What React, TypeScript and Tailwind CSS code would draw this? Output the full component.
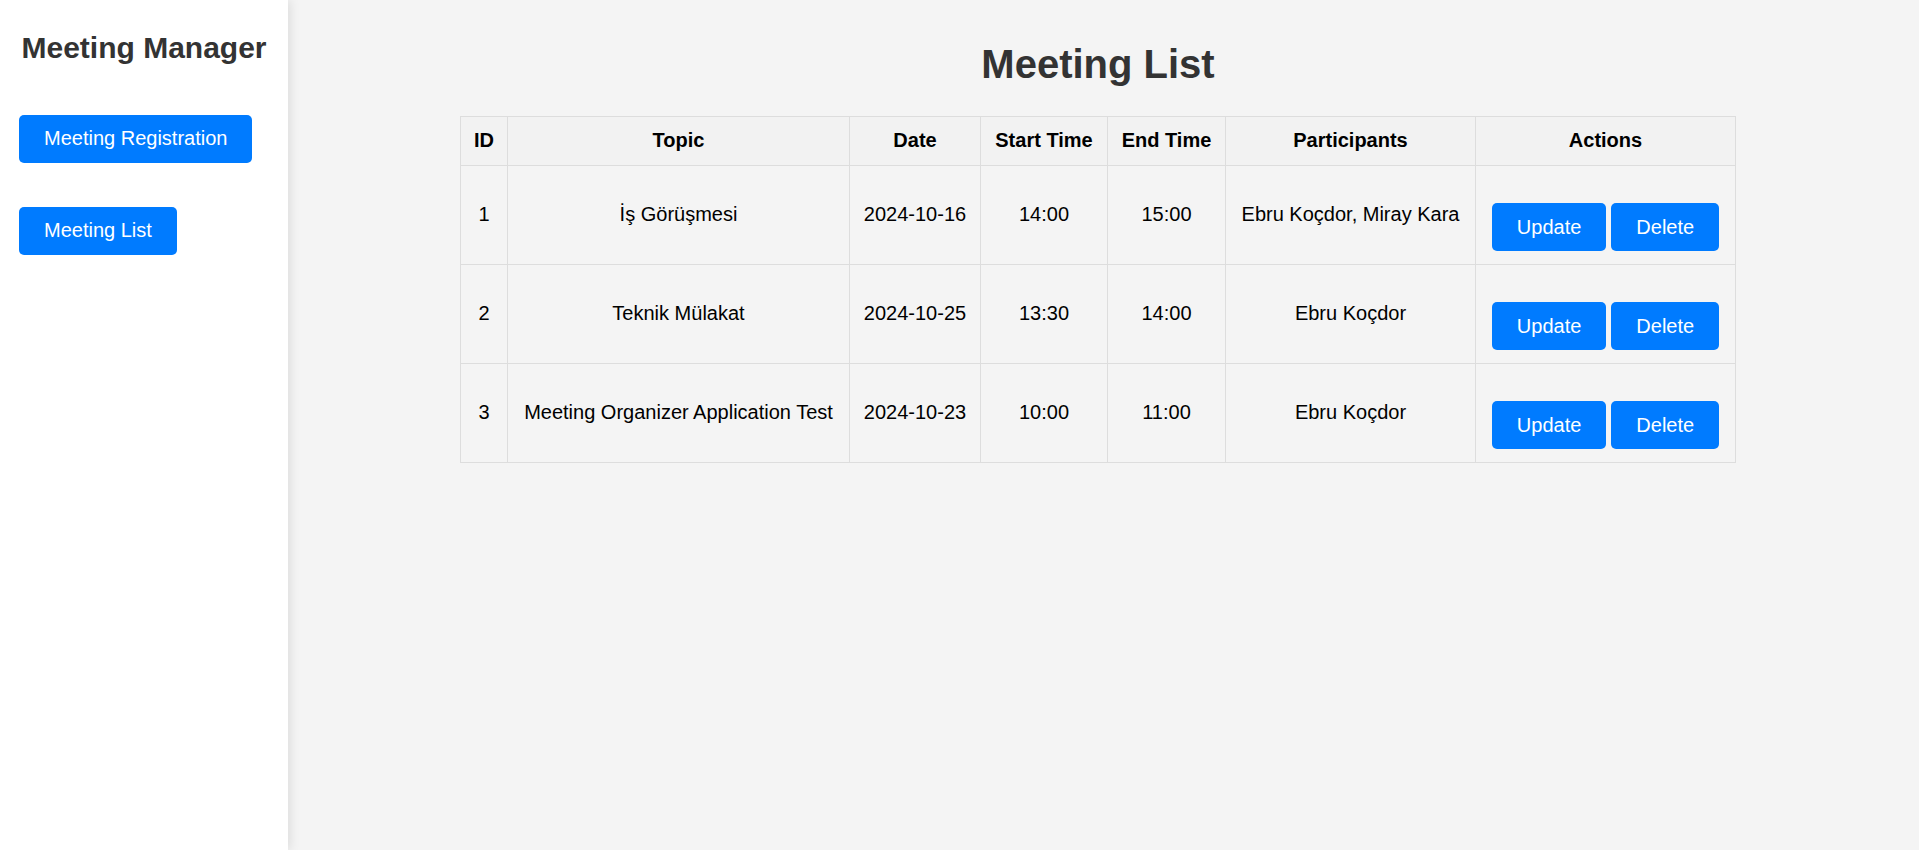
import React from 'react';

const meetings = [
  { id: 1, topic: 'İş Görüşmesi', date: '2024-10-16', start: '14:00', end: '15:00', participants: 'Ebru Koçdor, Miray Kara' },
  { id: 2, topic: 'Teknik Mülakat', date: '2024-10-25', start: '13:30', end: '14:00', participants: 'Ebru Koçdor' },
  { id: 3, topic: 'Meeting Organizer Application Test', date: '2024-10-23', start: '10:00', end: '11:00', participants: 'Ebru Koçdor' },
];

const headers = ['ID', 'Topic', 'Date', 'Start Time', 'End Time', 'Participants', 'Actions'];

const App = () => {
  return (
    <div className="flex min-h-[850px] bg-[#f4f4f4] font-['Liberation_Sans',Arial,sans-serif]">
      {/* Sidebar */}
      <aside className="w-[288px] shrink-0 bg-white pt-[31px] px-[19px] shadow-[2px_0_10px_rgba(0,0,0,0.1)] z-10">
        <h2 className="text-center text-[30px] leading-[1.15] font-bold text-[#333]">Meeting Manager</h2>
        <div className="flex flex-col items-start mt-[49px] gap-[44px]">
          <button className="h-[48px] px-[25px] rounded-[5px] bg-[#007bff] text-white text-[20px] leading-[23px]">
            Meeting Registration
          </button>
          <button className="h-[48px] px-[25px] rounded-[5px] bg-[#007bff] text-white text-[20px] leading-[23px]">
            Meeting List
          </button>
        </div>
      </aside>

      {/* Main */}
      <main className="flex-1 pt-[41px] pl-[20px] pr-[31px]">
        <h1 className="text-center text-[40px] leading-[46px] font-bold text-[#333] mb-[29px]">Meeting List</h1>
        <table className="mx-auto w-[1275px] table-fixed border-collapse text-[20px] text-black">
          <colgroup>
            <col className="w-[47px]" />
            <col className="w-[342px]" />
            <col className="w-[131px]" />
            <col className="w-[127px]" />
            <col className="w-[118px]" />
            <col className="w-[250px]" />
            <col className="w-[260px]" />
          </colgroup>
          <thead>
            <tr className="bg-[#f2f2f2]">
              {headers.map((h) => (
                <th key={h} className="h-[49px] border border-[#ddd] font-bold text-center align-middle px-0 pb-[2px]">
                  {h}
                </th>
              ))}
            </tr>
          </thead>
          <tbody>
            {meetings.map((m) => (
              <tr key={m.id}>
                <td className="h-[99px] border border-[#ddd] text-center align-middle pb-[2px]">{m.id}</td>
                <td className="h-[99px] border border-[#ddd] text-center align-middle pb-[2px]">{m.topic}</td>
                <td className="h-[99px] border border-[#ddd] text-center align-middle pb-[2px]">{m.date}</td>
                <td className="h-[99px] border border-[#ddd] text-center align-middle pb-[2px]">{m.start}</td>
                <td className="h-[99px] border border-[#ddd] text-center align-middle pb-[2px]">{m.end}</td>
                <td className="h-[99px] border border-[#ddd] text-center align-middle pb-[2px]">{m.participants}</td>
                <td className="h-[99px] border border-[#ddd] align-middle">
                  <div className="flex justify-center gap-[5px] pt-[24px]">
                    <button className="h-[48px] px-[25px] rounded-[5px] bg-[#007bff] text-white text-[20px]">Update</button>
                    <button className="h-[48px] px-[25px] rounded-[5px] bg-[#007bff] text-white text-[20px]">Delete</button>
                  </div>
                </td>
              </tr>
            ))}
          </tbody>
        </table>
      </main>
    </div>
  );
};

export default App;
